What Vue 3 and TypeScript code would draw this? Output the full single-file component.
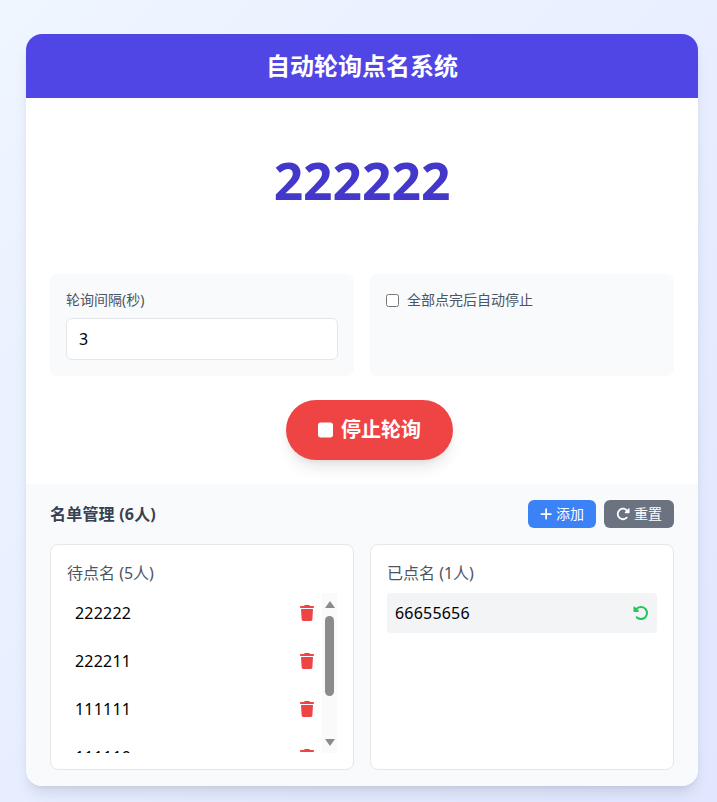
<script setup lang="ts">
import { ref } from 'vue'

const pending = ref<string[]>(['222222', '222211', '111111', '111110', '555555'])
const called = ref<string[]>(['66655656'])
const interval = ref<number>(3)
const autoStop = ref<boolean>(false)
</script>

<template>
  <div class="page">
    <div class="card">
      <header class="head"><h1>自动轮询点名系统</h1></header>
      <main class="main">
        <div class="current">222222</div>
        <div class="controls">
          <div class="box">
            <label class="label" for="gap">轮询间隔(秒)</label>
            <input id="gap" v-model="interval" class="input" type="number" />
          </div>
          <div class="box">
            <label class="check">
              <input v-model="autoStop" class="checkbox" type="checkbox" />
              <span>全部点完后自动停止</span>
            </label>
          </div>
        </div>
        <div class="action">
          <button class="stop" type="button">
            <svg class="stop-icon" viewBox="0 0 384 512"><path fill="currentColor" d="M0 128C0 92.7 28.7 64 64 64H320c35.3 0 64 28.7 64 64V384c0 35.3-28.7 64-64 64H64c-35.3 0-64-28.7-64-64V128z"/></svg>
            <span>停止轮询</span>
          </button>
        </div>
      </main>
      <section class="roster">
        <div class="roster-head">
          <h2>名单管理 (6人)</h2>
          <div class="tools">
            <button class="tool add" type="button">
              <svg class="tool-icon plus" viewBox="0 0 448 512"><path fill="currentColor" d="M256 80c0-17.7-14.3-32-32-32s-32 14.3-32 32V224H48c-17.7 0-32 14.3-32 32s14.3 32 32 32H192V432c0 17.7 14.3 32 32 32s32-14.3 32-32V288H400c17.7 0 32-14.3 32-32s-14.3-32-32-32H256V80z"/></svg>
              <span>添加</span>
            </button>
            <button class="tool reset" type="button">
              <svg class="tool-icon" viewBox="0 0 512 512"><path fill="currentColor" d="M463.5 224H472c13.3 0 24-10.7 24-24V72c0-9.7-5.8-18.5-14.8-22.2s-19.3-1.7-26.2 5.2L413.4 96.6c-87.6-86.5-228.7-86.2-315.8 1c-87.5 87.5-87.5 229.3 0 316.8s229.3 87.5 316.8 0c12.5-12.5 12.5-32.8 0-45.3s-32.8-12.5-45.3 0c-62.5 62.5-163.8 62.5-226.3 0s-62.5-163.8 0-226.3c62.2-62.2 162.7-62.5 225.3-1L327 183c-6.9 6.9-8.9 17.2-5.2 26.2s12.5 14.8 22.2 14.8H463.5z"/></svg>
              <span>重置</span>
            </button>
          </div>
        </div>
        <div class="panels">
          <div class="panel">
            <h3>待点名 (5人)</h3>
            <div class="list-row">
              <ul class="list">
                <li v-for="name in pending" :key="name" class="item">
                  <span>{{ name }}</span>
                  <svg class="trash" viewBox="0 0 448 512"><path fill="currentColor" d="M135.2 17.7L128 32H32C14.3 32 0 46.3 0 64S14.3 96 32 96H416c17.7 0 32-14.3 32-32s-14.3-32-32-32H320l-7.2-14.3C307.4 6.8 296.3 0 284.2 0H163.8c-12.1 0-23.2 6.8-28.6 17.7zM416 128H32L53.2 467c1.6 25.3 22.6 45 47.9 45H346.9c25.3 0 46.3-19.7 47.9-45L416 128z"/></svg>
                </li>
              </ul>
              <div class="bar" aria-hidden="true">
                <span class="arrow up"></span>
                <span class="thumb"></span>
                <span class="arrow down"></span>
              </div>
            </div>
          </div>
          <div class="panel">
            <h3>已点名 (1人)</h3>
            <ul class="list">
              <li v-for="name in called" :key="name" class="item done">
                <span>{{ name }}</span>
                <svg class="undo" viewBox="0 0 512 512"><path fill="currentColor" d="M48.5 224H40c-13.3 0-24-10.7-24-24V72c0-9.7 5.8-18.5 14.8-22.2s19.3-1.7 26.2 5.2L98.6 96.6c87.6-86.5 228.7-86.2 315.8 1c87.5 87.5 87.5 229.3 0 316.8s-229.3 87.5-316.8 0c-12.5-12.5-12.5-32.8 0-45.3s32.8-12.5 45.3 0c62.5 62.5 163.8 62.5 226.3 0s62.5-163.8 0-226.3c-62.2-62.2-162.7-62.5-225.3-1L185 183c6.9 6.9 8.9 17.2 5.2 26.2s-12.5 14.8-22.2 14.8H48.5z"/></svg>
              </li>
            </ul>
          </div>
        </div>
      </section>
    </div>
  </div>
</template>

<style>
html, body { margin: 0; padding: 0; }
</style>

<style scoped>
* { box-sizing: border-box; }
.page {
  height: 802px;
  overflow: hidden;
  padding: 34px 19px 16px 26px;
  background: linear-gradient(135deg, #eff6ff, #e0e7ff);
  font-family: "Noto Sans", "Noto Sans CJK SC", sans-serif;
  color: #000;
}
.card {
  height: 752px;
  border-radius: 16px;
  overflow: hidden;
  background: #fff;
  box-shadow: 0 10px 15px -3px rgba(0, 0, 0, .1), 0 4px 6px -4px rgba(0, 0, 0, .1);
}
.head {
  height: 64px;
  padding: 16px;
  background: #4f46e5;
  color: #fff;
  text-align: center;
}
.head h1 { margin: 0; font-size: 24px; line-height: 32px; font-weight: 700; }
.main { padding: 24px; }
.current {
  height: 120px;
  padding-bottom: 5px;
  margin-bottom: 32px;
  display: flex;
  align-items: center;
  justify-content: center;
  font-size: 51.5px;
  font-weight: 700;
  color: #4338ca;
}
.controls { display: grid; grid-template-columns: 1fr 1fr; gap: 16px; margin-bottom: 24px; }
.box { height: 102px; padding: 16px; border-radius: 8px; background: #f9fafb; }
.label { display: block; margin-bottom: 8px; font-size: 14px; line-height: 20px; color: #4b5563; }
.input {
  display: block;
  width: 100%;
  height: 42px;
  padding: 8px 12px;
  border: 1px solid #e5e7eb;
  border-radius: 6px;
  background: #fff;
  font: 16px "Noto Sans", sans-serif;
  color: #000;
  outline: none;
}
.check { display: flex; align-items: center; height: 20px; font-size: 14px; line-height: 20px; color: #4b5563; }
.checkbox { width: 13px; height: 13px; margin: 0 8px 0 0; }
.action { display: flex; justify-content: center; padding-left: 15px; }
.stop {
  display: flex;
  align-items: center;
  gap: 8px;
  height: 60px;
  padding: 0 32px;
  border: 0;
  border-radius: 30px;
  background: #ef4444;
  color: #fff;
  font: 700 20px/28px "Noto Sans", "Noto Sans CJK SC", sans-serif;
  box-shadow: 0 10px 15px -3px rgba(0, 0, 0, .1), 0 4px 6px -4px rgba(0, 0, 0, .1);
}
.stop-icon { width: 15px; height: 20px; }
.roster { height: 302px; padding: 16px 24px; background: #f9fafb; }
.roster-head { display: flex; align-items: center; justify-content: space-between; height: 28px; margin-bottom: 16px; }
.roster-head h2 { margin: 0; font-size: 16px; line-height: 24px; font-weight: 700; color: #374151; letter-spacing: .2px; }
.tools { display: flex; gap: 8px; }
.tool {
  display: flex;
  align-items: center;
  gap: 4px;
  height: 28px;
  padding: 0 12px;
  border: 0;
  border-radius: 6px;
  color: #fff;
  font: 14px/20px "Noto Sans", "Noto Sans CJK SC", sans-serif;
}
.add { background: #3b82f6; }
.reset { background: #6b7280; }
.tool-icon { width: 14px; height: 14px; }
.tool-icon.plus { width: 12.25px; }
.panels { display: grid; grid-template-columns: 1fr 1fr; gap: 16px; }
.panel {
  height: 226px;
  padding: 16px;
  border: 1px solid #e5e7eb;
  border-radius: 8px;
  background: #fff;
}
.panel h3 { margin: 0 0 8px; font-size: 16px; line-height: 24px; font-weight: 400; color: #4b5563; }
.list-row { display: flex; height: 160px; }
.list { flex: 1; height: 160px; margin: 0; padding: 0; list-style: none; overflow: hidden; }
.item {
  display: flex;
  align-items: center;
  justify-content: space-between;
  height: 40px;
  margin-bottom: 8px;
  padding: 0 8px;
  border-radius: 4px;
  font-size: 16px;
  letter-spacing: .2px;
}
.done { background: #f3f4f6; }
.trash { width: 14px; height: 16px; color: #ef4444; }
.undo { width: 16px; height: 16px; color: #22c55e; }
.bar {
  display: flex;
  flex-direction: column;
  align-items: center;
  flex: none;
  width: 15px;
  height: 160px;
  padding-top: 8px;
  background: #fafafa;
}
.thumb {
  width: 9px;
  height: 80px;
  margin-top: 8px;
  border-radius: 5px;
  background: #8b8b8b;
}
.arrow { width: 0; height: 0; border-left: 5px solid transparent; border-right: 5px solid transparent; }
.arrow.up { border-bottom: 7px solid #8b8b8b; }
.arrow.down { margin-top: 43px; border-top: 7px solid #8b8b8b; }
</style>
